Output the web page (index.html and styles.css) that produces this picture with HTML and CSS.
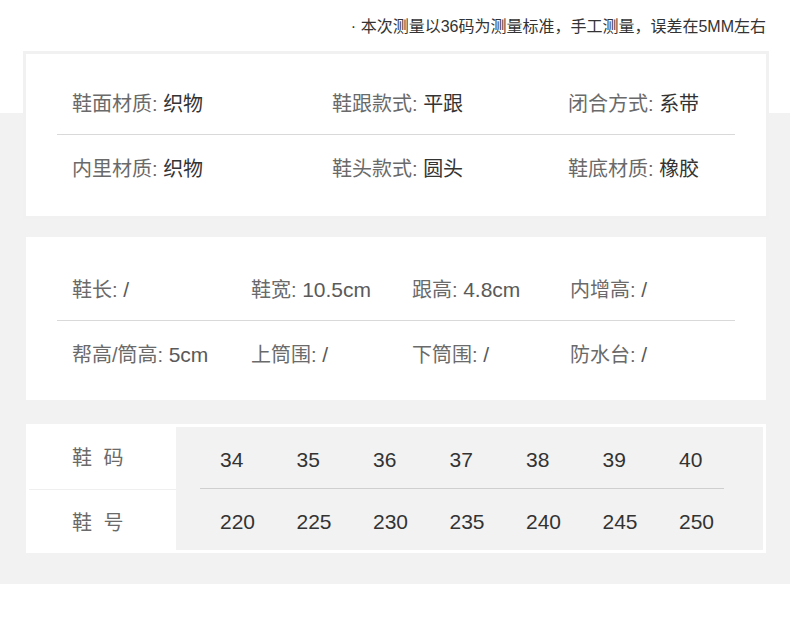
FILE: index.html
```html
<!DOCTYPE html>
<html lang="zh">
<head>
<meta charset="utf-8">
<link rel="stylesheet" href="styles.css">
</head>
<body>
<div class="note">· 本次测量以36码为测量标准，手工测量，误差在5MM左右</div>
<div class="band">
  <section class="card card-material">
    <div class="row cols-3">
      <div class="item"><span class="lbl">鞋面材质: </span><span class="val">织物</span></div>
      <div class="item"><span class="lbl">鞋跟款式: </span><span class="val">平跟</span></div>
      <div class="item"><span class="lbl">闭合方式: </span><span class="val">系带</span></div>
    </div>
    <div class="row cols-3 sep">
      <div class="item"><span class="lbl">内里材质: </span><span class="val">织物</span></div>
      <div class="item"><span class="lbl">鞋头款式: </span><span class="val">圆头</span></div>
      <div class="item"><span class="lbl">鞋底材质: </span><span class="val">橡胶</span></div>
    </div>
  </section>

  <section class="card card-size">
    <div class="row cols-4">
      <div class="item"><span class="lbl">鞋长: </span><span class="val2">/</span></div>
      <div class="item"><span class="lbl">鞋宽: </span><span class="val2">10.5cm</span></div>
      <div class="item"><span class="lbl">跟高: </span><span class="val2">4.8cm</span></div>
      <div class="item"><span class="lbl">内增高: </span><span class="val2">/</span></div>
    </div>
    <div class="row cols-4 sep">
      <div class="item"><span class="lbl">帮高/筒高: </span><span class="val2">5cm</span></div>
      <div class="item"><span class="lbl">上筒围: </span><span class="val2">/</span></div>
      <div class="item"><span class="lbl">下筒围: </span><span class="val2">/</span></div>
      <div class="item"><span class="lbl">防水台: </span><span class="val2">/</span></div>
    </div>
  </section>

  <section class="card card-table">
    <div class="heads">
      <div class="head h1">鞋 码</div>
      <div class="head h2">鞋 号</div>
    </div>
    <div class="panel">
      <div class="nums n1">
        <span>34</span><span>35</span><span>36</span><span>37</span><span>38</span><span>39</span><span>40</span>
      </div>
      <div class="nums n2">
        <span>220</span><span>225</span><span>230</span><span>235</span><span>240</span><span>245</span><span>250</span>
      </div>
    </div>
  </section>
</div>
</body>
</html>
```

FILE: styles.css
```css
html, body {
  margin: 0;
  padding: 0;
  background: #fff;
}

body {
  font-family: "Liberation Sans", "Noto Sans CJK SC", sans-serif;
  color: #333;
}

.note {
  height: 51px;
  box-sizing: border-box;
  padding: 17px 24px 0 0;
  text-align: right;
  font-size: 16px;
  line-height: 20px;
  color: #333;
}

.band {
  background: linear-gradient(to bottom, #fff 0, #fff 62px, #f2f2f2 62px);
  padding: 0 21px 28px 23px;
}

.card {
  background: #fff;
  border: 3px solid #f1f1f1;
}

.card-material {
  padding: 16px 31px 17px 31px;
}

.card-size {
  margin-top: 15px;
  border-color: #f2f2f2;
  padding: 19px 31px 15px 31px;
}

.row {
  display: grid;
  height: 64px;
  align-items: center;
  padding-left: 15px;
  font-size: 20px;
}

.row.sep {
  border-top: 1px solid #d9d9d9;
}

.cols-3 {
  grid-template-columns: 260px 236px 1fr;
}

.cols-4 {
  grid-template-columns: 179px 161px 158px 1fr;
}

.item {
  white-space: nowrap;
}

.lbl {
  color: #6a6a6a;
}

.val {
  color: #333;
}

.val2 {
  color: #5a5a5a;
  font-size: 21px;
}

.card-table {
  margin-top: 18px;
  border-color: #f2f2f2;
  display: flex;
  height: 129px;
}

.heads {
  flex: none;
  width: 150px;
  display: flex;
  flex-direction: column;
}

.head {
  font-size: 20px;
  letter-spacing: 3px;
  color: #6a6a6a;
  display: flex;
  align-items: center;
}

.h1 {
  height: 65px;
  margin-left: 3px;
  padding-left: 43px;
  border-bottom: 1px solid #efefef;
}

.h2 {
  height: 63px;
  padding-left: 46px;
}

.panel {
  flex: 1;
  min-width: 0;
  background: #f2f2f2;
  margin: 3px 3px 3px 0;
  padding: 0 39px 0 24px;
}

.nums {
  display: grid;
  grid-template-columns: repeat(7, 76.5px);
  padding-left: 20px;
  align-items: center;
  font-size: 21px;
  color: #333;
  box-sizing: border-box;
}

.n1 {
  height: 62px;
  padding-top: 4px;
  border-bottom: 1px solid #cfcfcf;
}

.n2 {
  height: 60px;
  padding-top: 6px;
}
```
